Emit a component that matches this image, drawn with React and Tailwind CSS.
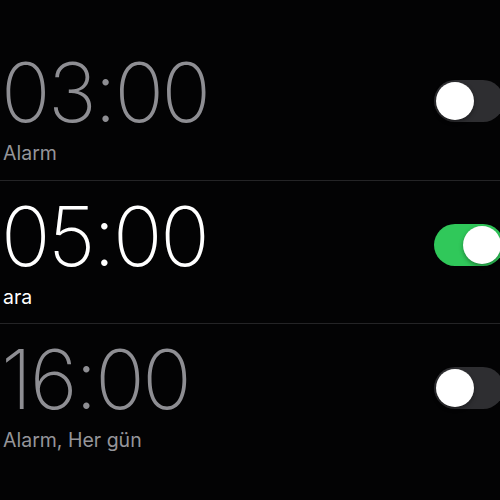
import { useState } from "react";

const alarms = [
  { id: 1, time: "03:00", label: "Alarm", on: false },
  { id: 2, time: "05:00", label: "ara", on: true },
  { id: 3, time: "16:00", label: "Alarm, Her gün", on: false },
];

// iOS style switch, sits cut off at the right edge
function Toggle({ on, onClick }) {
  return (
    <button
      onClick={onClick}
      className={[
        "relative h-[42px] w-[70px] shrink-0 rounded-full -mr-[4px]",
        on ? "bg-[#30c85a]" : "bg-[#2e2e31]",
      ].join(" ")}
    >
      <span
        className={[
          "absolute top-[2px] h-[38px] w-[38px] rounded-full bg-white shadow-[0_2px_4px_rgba(0,0,0,0.35)]",
          on ? "left-[29px] bg-[#eef2ee]" : "left-[2px]",
        ].join(" ")}
      />
    </button>
  );
}

export default function App() {
  const [list, setList] = useState(alarms);

  function flip(id) {
    setList(list.map(a => (a.id === id ? { ...a, on: !a.on } : a)));
  }

  return (
    <div className="h-[500px] w-[500px] overflow-hidden bg-[#030304] pt-[37px] font-['Inter','Liberation_Sans',sans-serif]">
      {list.map((a, i) => (
        <div
          key={a.id}
          className={[
            "flex h-[143px] items-start justify-between",
            i > 0 ? "border-t border-[#242426]" : "",
          ].join(" ")}
        >
          <div className="pl-[1px]">
            <div
              className={[
                "mt-[8px] text-[82px] font-extralight leading-[96px] tracking-[-2.5px]",
                a.on ? "text-white" : "text-[#8e8e93]",
              ].join(" ")}
            >
              {a.time}
            </div>
            <div
              className={[
                "mt-[0px] pl-[2px] text-[19.5px] leading-[24px]",
                a.on ? "text-white" : "text-[#95959a]",
              ].join(" ")}
            >
              {a.label}
            </div>
          </div>
          <div className="mt-[43px]">
            <Toggle on={a.on} onClick={() => flip(a.id)} />
          </div>
        </div>
      ))}
    </div>
  );
}
